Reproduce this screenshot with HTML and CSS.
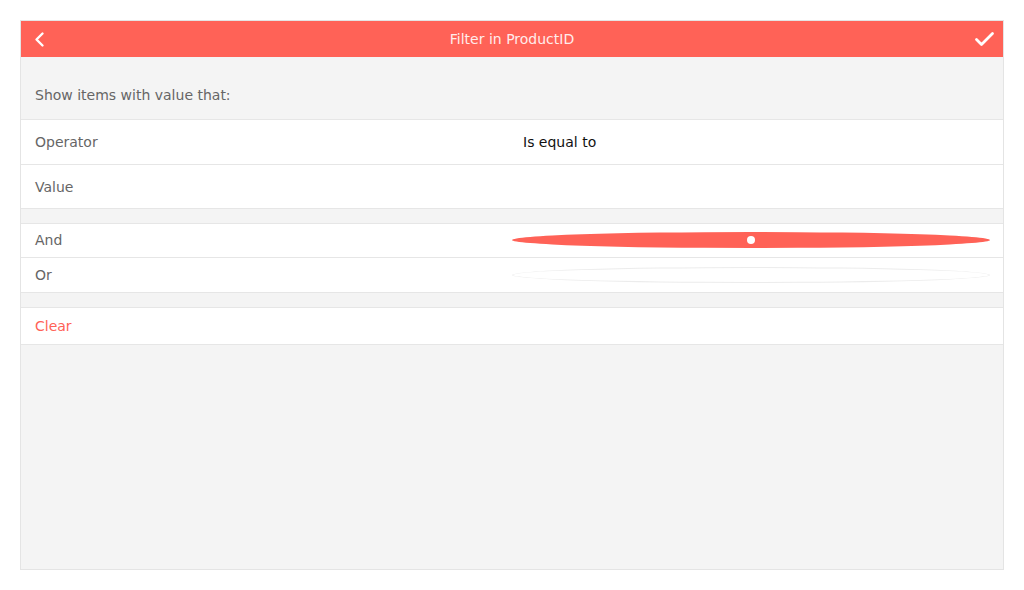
FILE: index.html
```html
<!DOCTYPE html>
<html>
<head>
<meta charset="utf-8">
<title>Filter in ProductID</title>
<link rel="stylesheet" href="styles.css">
</head>
<body>
<div class="panel">
  <header class="bar">
    <button class="icon-btn" aria-label="Back">
      <svg width="36" height="36" viewBox="0 0 36 36"><path d="M21.5 12.5 L15.5 18.5 L21.5 24.5" fill="none" stroke="#fff" stroke-width="2.4" stroke-linecap="round" stroke-linejoin="round"/></svg>
    </button>
    <div class="title">Filter in ProductID</div>
    <button class="icon-btn" aria-label="Apply">
      <svg width="36" height="36" viewBox="0 0 36 36"><path d="M9.5 18.5 L14.5 23.5 L25.5 12.5" fill="none" stroke="#fff" stroke-width="2.8" stroke-linecap="round" stroke-linejoin="round"/></svg>
    </button>
  </header>

  <div class="intro">Show items with value that:</div>

  <div class="group">
    <div class="row row-op">
      <div class="label">Operator</div>
      <div class="value">Is equal to</div>
    </div>
    <div class="row row-val">
      <div class="label">Value</div>
      <div class="value"></div>
    </div>
  </div>

  <div class="group">
    <div class="row row-and">
      <div class="label">And</div>
      <div class="radio-cell"><span class="radio checked"></span></div>
    </div>
    <div class="row row-or">
      <div class="label">Or</div>
      <div class="radio-cell"><span class="radio"></span></div>
    </div>
  </div>

  <div class="group">
    <div class="row row-clear">
      <div class="label clear">Clear</div>
    </div>
  </div>
</div>
</body>
</html>
```

FILE: styles.css
```css
html, body {
  margin: 0;
  padding: 0;
  background: #ffffff;
}

body {
  padding: 20px;
  font-family: "DejaVu Sans", "Liberation Sans", sans-serif;
  font-size: 14px;
}

.panel {
  width: 984px;
  height: 550px;
  box-sizing: border-box;
  border: 1px solid #e4e4e4;
  background: #f4f4f4;
  display: flex;
  flex-direction: column;
}

.bar {
  height: 36px;
  background: #ff6257;
  display: grid;
  grid-template-columns: 36px 1fr 36px;
  align-items: center;
}

.icon-btn {
  width: 36px;
  height: 36px;
  padding: 0;
  margin: 0;
  border: 0;
  background: transparent;
  display: block;
}

.icon-btn svg {
  display: block;
}

.title {
  text-align: center;
  color: #ffeceb;
  line-height: 20px;
}

.intro {
  height: 62px;
  box-sizing: border-box;
  display: flex;
  align-items: flex-end;
  padding: 0 14px 14px;
  color: #666666;
  line-height: 20px;
}

.group {
  background: #ffffff;
  border-top: 1px solid #e6e6e6;
  border-bottom: 1px solid #e6e6e6;
  margin-bottom: 14px;
}

.row {
  display: grid;
  grid-template-columns: 491px 1fr;
  align-items: center;
}

.row + .row {
  border-top: 1px solid #e6e6e6;
}

.row-op { height: 44px; }
.row-val { height: 43px; }
.row-and { height: 33px; box-sizing: border-box; padding-bottom: 1px; }
.row-or { height: 34px; }
.row-clear { height: 36px; }

.label {
  padding-left: 14px;
  color: #666666;
  line-height: 20px;
}

.label.clear {
  color: #ff6257;
}

.value {
  padding-left: 11px;
  color: #111111;
  line-height: 20px;
}

.radio-cell {
  padding-right: 13px;
  display: flex;
  align-items: center;
}

.radio {
  display: block;
  flex: 1;
  height: 16px;
  box-sizing: border-box;
  border-radius: 50%;
  border: 1px solid #ececec;
  background: #ffffff;
  position: relative;
}

.radio.checked {
  border: 0;
  background: #ff6257;
}

.radio.checked::after {
  content: "";
  position: absolute;
  left: 50%;
  top: 50%;
  width: 8px;
  height: 8px;
  margin: -4px 0 0 -4px;
  border-radius: 50%;
  background: #ffffff;
}
```
